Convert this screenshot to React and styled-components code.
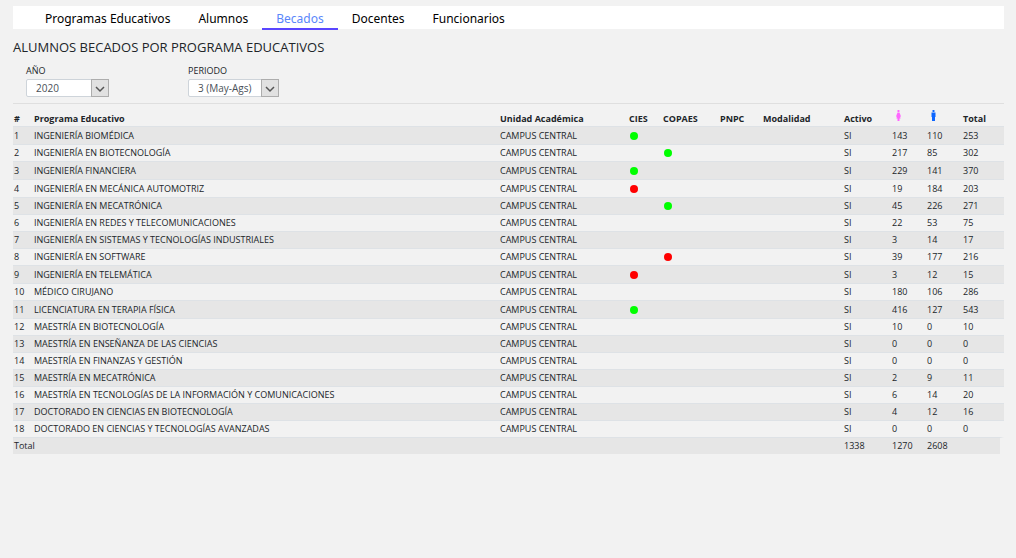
import React from "react";
import styled, { createGlobalStyle } from "styled-components";

const GlobalStyle = createGlobalStyle`
  * { box-sizing: border-box; }
  body {
    margin: 0;
    background: #f2f2f2;
    color: #212529;
    font-family: "Open Sans", "Noto Sans", sans-serif;
    font-size: 9px;
    line-height: 16px;
  }
`;

const Page = styled.div`
  padding: 6px 12px 24px 13px;
`;

const Nav = styled.nav`
  display: flex;
  height: 23px;
  padding-left: 18px;
  background: #fff;
`;

const Tab = styled.a`
  height: 24px;
  padding: 0 14px;
  border-bottom: 2px solid ${(p) => (p.$active ? "#5a46ff" : "transparent")};
  color: ${(p) => (p.$active ? "#5a87fb" : "#000")};
  font-family: "Noto Sans", sans-serif;
  font-size: 12px;
  line-height: 26px;
  text-decoration: none;
`;

const Title = styled.h1`
  margin: 8px 0 0;
  font-size: 13px;
  font-weight: 400;
  line-height: 20px;
`;

const Filters = styled.form`
  display: flex;
  gap: 79px;
  padding: 6px 13px;
  border-bottom: 1px solid #dfdfdf;
`;

const Field = styled.label`
  display: flex;
  flex-direction: column;
  width: ${(p) => p.$width}px;
`;

const Picker = styled.span`
  display: flex;
  position: relative;
  height: 18px;
`;

const Select = styled.select`
  flex: 1;
  min-width: 0;
  appearance: none;
  padding: 0 18px 0 9px;
  border: 1px solid #ced4da;
  border-radius: 2px;
  background: #fff;
  color: #495057;
  font: 10px "Open Sans", sans-serif;
`;

const Arrow = styled.svg`
  position: absolute;
  top: 0;
  right: 0;
  width: 18px;
  height: 18px;
  pointer-events: none;
`;

const Table = styled.table`
  width: 100%;
  margin-top: 6px;
  border-collapse: separate;
  border-spacing: 0;
  table-layout: fixed;
`;

const Col = styled.col`
  width: ${(p) => (p.$width ? `${p.$width}px` : "auto")};
`;

const HeadCell = styled.th`
  height: 16px;
  padding: 0 0 0 1px;
  font-weight: 700;
  line-height: 14px;
  text-align: left;
  vertical-align: bottom;
  white-space: nowrap;
`;

const Row = styled.tr`
  height: ${(p) => (p.$tall ? 18 : 17)}px;
  &:nth-child(odd) { background: #e6e6e6; }
`;

const Cell = styled.td`
  padding: 0 0 0 1px;
  border-top: 1px solid #dee2e6;
  white-space: nowrap;
`;

const TotalCell = styled(Cell)`
  background: #e6e6e6;
`;

const TotalEnd = styled(TotalCell)`
  border-right: 4px solid #f2f2f2;
`;

const Dot = styled.span`
  display: block;
  width: 8px;
  height: 8px;
  margin-left: 1px;
  border-radius: 50%;
  background: ${(p) => (p.$on ? "#00ff00" : "#ff0000")};
`;

const PersonIcon = styled.svg`
  display: block;
  width: 7px;
  height: 11px;
  margin: 0 0 5px 3px;
`;

const tabs = ["Programas Educativos", "Alumnos", "Becados", "Docentes", "Funcionarios"];
const widths = [20, null, 129, 34, 57, 43, 81, 48, 35, 36, 42];

const rows = [
  ["INGENIERÍA BIOMÉDICA", "g", "", 143, 110, 253],
  ["INGENIERÍA EN BIOTECNOLOGÍA", "", "g", 217, 85, 302],
  ["INGENIERÍA FINANCIERA", "g", "", 229, 141, 370],
  ["INGENIERÍA EN MECÁNICA AUTOMOTRIZ", "r", "", 19, 184, 203],
  ["INGENIERÍA EN MECATRÓNICA", "", "g", 45, 226, 271],
  ["INGENIERÍA EN REDES Y TELECOMUNICACIONES", "", "", 22, 53, 75],
  ["INGENIERÍA EN SISTEMAS Y TECNOLOGÍAS INDUSTRIALES", "", "", 3, 14, 17],
  ["INGENIERÍA EN SOFTWARE", "", "r", 39, 177, 216],
  ["INGENIERÍA EN TELEMÁTICA", "r", "", 3, 12, 15],
  ["MÉDICO CIRUJANO", "", "", 180, 106, 286],
  ["LICENCIATURA EN TERAPIA FÍSICA", "g", "", 416, 127, 543],
  ["MAESTRÍA EN BIOTECNOLOGÍA", "", "", 10, 0, 10],
  ["MAESTRÍA EN ENSEÑANZA DE LAS CIENCIAS", "", "", 0, 0, 0],
  ["MAESTRÍA EN FINANZAS Y GESTIÓN", "", "", 0, 0, 0],
  ["MAESTRÍA EN MECATRÓNICA", "", "", 2, 9, 11],
  ["MAESTRÍA EN TECNOLOGÍAS DE LA INFORMACIÓN Y COMUNICACIONES", "", "", 6, 14, 20],
  ["DOCTORADO EN CIENCIAS EN BIOTECNOLOGÍA", "", "", 4, 12, 16],
  ["DOCTORADO EN CIENCIAS Y TECNOLOGÍAS AVANZADAS", "", "", 0, 0, 0],
];

function Mark({ value }) {
  if (!value) return null;
  const on = value === "g";
  return <Dot $on={on} role="img" aria-label={on ? "Vigente" : "No vigente"} />;
}

function Dropdown({ label, width, value }) {
  return (
    <Field $width={width}>
      {label}
      <Picker>
        <Select defaultValue={value}>
          <option>{value}</option>
        </Select>
        <Arrow viewBox="0 0 18 18" aria-hidden="true">
          <rect x="0.5" y="0.5" width="17" height="17" fill="#e1e1e1" stroke="#adadad" />
          <path d="M5 8l4 4 4-4" fill="none" stroke="#555" strokeWidth="1.5" />
        </Arrow>
      </Picker>
    </Field>
  );
}

export default function App() {
  return (
    <>
      <GlobalStyle />
      <Page>
        <Nav>
          {tabs.map((t) => (
            <Tab key={t} href="#" $active={t === "Becados"}>{t}</Tab>
          ))}
        </Nav>
        <main>
          <Title>ALUMNOS BECADOS POR PROGRAMA EDUCATIVOS</Title>
          <Filters>
            <Dropdown label="AÑO" width={83} value="2020" />
            <Dropdown label="PERIODO" width={91} value="3 (May-Ags)" />
          </Filters>
          <Table>
            <colgroup>
              {widths.map((w, i) => <Col key={i} $width={w} />)}
            </colgroup>
            <thead>
              <tr>
                <HeadCell>#</HeadCell>
                <HeadCell>Programa Educativo</HeadCell>
                <HeadCell>Unidad Académica</HeadCell>
                <HeadCell>CIES</HeadCell>
                <HeadCell>COPAES</HeadCell>
                <HeadCell>PNPC</HeadCell>
                <HeadCell>Modalidad</HeadCell>
                <HeadCell>Activo</HeadCell>
                <HeadCell>
                  <PersonIcon viewBox="0 0 7 11" role="img" aria-label="Mujeres" fill="#ff66ff">
                    <rect x="2.5" y="0" width="2" height="2" rx="0.6" />
                    <path d="M2.500 2.600h2L6 6.500l-.9.300.500 1.700H4.500V11h-2V8.500H1.400l.5-1.700L1 6.500z" />
                  </PersonIcon>
                </HeadCell>
                <HeadCell>
                  <PersonIcon viewBox="0 0 7 11" role="img" aria-label="Hombres" fill="#0d66ff">
                    <rect x="2.500" y="0" width="2" height="2" rx="0.6" />
                    <path d="M1.500 2.500h4V7H5v4H2V7h-.5z" />
                  </PersonIcon>
                </HeadCell>
                <HeadCell>Total</HeadCell>
              </tr>
            </thead>
            <tbody>
              {rows.map(([name, cies, copaes, women, men, total], i) => (
                <Row key={name} $tall={cies !== ""}>
                  <Cell>{i + 1}</Cell>
                  <Cell>{name}</Cell>
                  <Cell>CAMPUS CENTRAL</Cell>
                  <Cell><Mark value={cies} /></Cell>
                  <Cell><Mark value={copaes} /></Cell>
                  <Cell />
                  <Cell />
                  <Cell>SI</Cell>
                  <Cell>{women}</Cell>
                  <Cell>{men}</Cell>
                  <Cell>{total}</Cell>
                </Row>
              ))}
            </tbody>
            <tfoot>
              <tr>
                <TotalCell colSpan={7}>Total</TotalCell>
                <TotalCell>1338</TotalCell>
                <TotalCell>1270</TotalCell>
                <TotalCell>2608</TotalCell>
                <TotalEnd />
              </tr>
            </tfoot>
          </Table>
        </main>
      </Page>
    </>
  );
}
